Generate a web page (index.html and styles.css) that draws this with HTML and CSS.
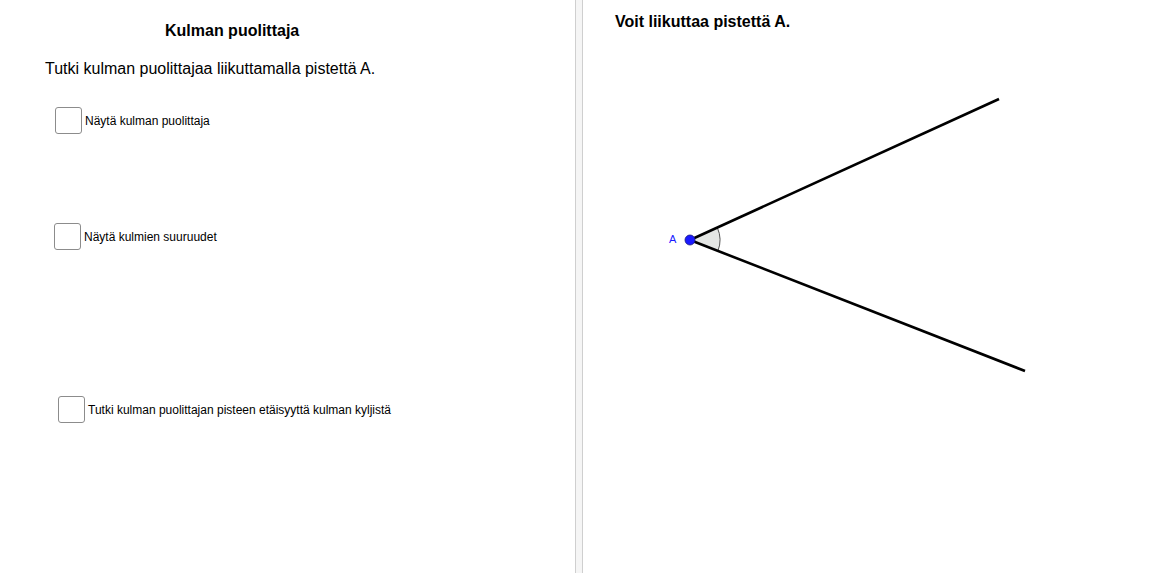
FILE: index.html
```html
<!DOCTYPE html>
<html lang="fi">
<head>
<meta charset="utf-8">
<title>Kulman puolittaja</title>
<link rel="stylesheet" href="styles.css">
</head>
<body>
<div class="app">
  <section class="panel-left">
    <h1 class="title">Kulman puolittaja</h1>
    <p class="intro">Tutki kulman puolittajaa liikuttamalla pistettä A.</p>
    <label class="check check-1"><span class="box"></span><span class="lbl">Näytä kulman puolittaja</span></label>
    <label class="check check-2"><span class="box"></span><span class="lbl">Näytä kulmien suuruudet</span></label>
    <label class="check check-3"><span class="box"></span><span class="lbl">Tutki kulman puolittajan pisteen etäisyyttä kulman kyljistä</span></label>
  </section>
  <div class="divider"></div>
  <section class="panel-right">
    <h2 class="hint">Voit liikuttaa pistettä A.</h2>
    <svg class="canvas" width="585" height="576" viewBox="0 0 585 576">
      <path d="M107 240 L134.3 227.6 A30 30 0 0 1 134.9 251 Z" fill="#e4e6e4" stroke="none"/>
      <path d="M134.3 227.6 A30 30 0 0 1 134.9 251" fill="none" stroke="#555" stroke-width="1"/>
      <line x1="107" y1="240" x2="416" y2="99" stroke="#000" stroke-width="2.6"/>
      <line x1="107" y1="240" x2="442" y2="371" stroke="#000" stroke-width="2.6"/>
      <circle cx="107" cy="240" r="5" fill="#1a1aff" stroke="#1a1a80" stroke-width="0.8"/>
      <text x="86" y="243" class="ptlabel">A</text>
    </svg>
  </section>
</div>
</body>
</html>
```
FILE: styles.css
```css
html, body {
  margin: 0;
  padding: 0;
  background: #fff;
}
body {
  font-family: "Liberation Sans", Arial, sans-serif;
  color: #000;
  width: 1168px;
  height: 576px;
  overflow: hidden;
}
.app {
  display: flex;
  width: 1168px;
  height: 573px;
}
.panel-left {
  width: 575px;
  flex: none;
  display: flex;
  flex-direction: column;
  align-items: flex-start;
}
.title {
  margin: 22px 0 0 165px;
  font-size: 16px;
  font-weight: bold;
  line-height: 18px;
}
.intro {
  margin: 20px 0 0 45px;
  font-size: 16px;
  line-height: 18px;
}
.check {
  display: flex;
  align-items: center;
  gap: 3px;
  font-size: 12px;
  line-height: 14px;
}
.box {
  width: 25px;
  height: 25px;
  border: 1px solid #8c8c8c;
  border-radius: 3px;
  background: #fff;
  flex: none;
}
.check-1 { margin: 29px 0 0 55px; }
.check-2 { margin: 89px 0 0 54px; }
.check-3 { margin: 146px 0 0 58px; }
.divider {
  width: 6px;
  flex: none;
  background: #f5f5f5;
  border-left: 1px solid #cfcfcf;
  border-right: 1px solid #cfcfcf;
}
.panel-right {
  flex: 1;
  position: relative;
}
.hint {
  margin: 13px 0 0 32px;
  font-size: 16px;
  font-weight: bold;
  line-height: 18px;
  position: relative;
  z-index: 1;
}
.canvas {
  position: absolute;
  left: 0;
  top: 0;
}
.ptlabel {
  font-family: "Liberation Sans", Arial, sans-serif;
  font-size: 11px;
  fill: #1a1aff;
}
```
